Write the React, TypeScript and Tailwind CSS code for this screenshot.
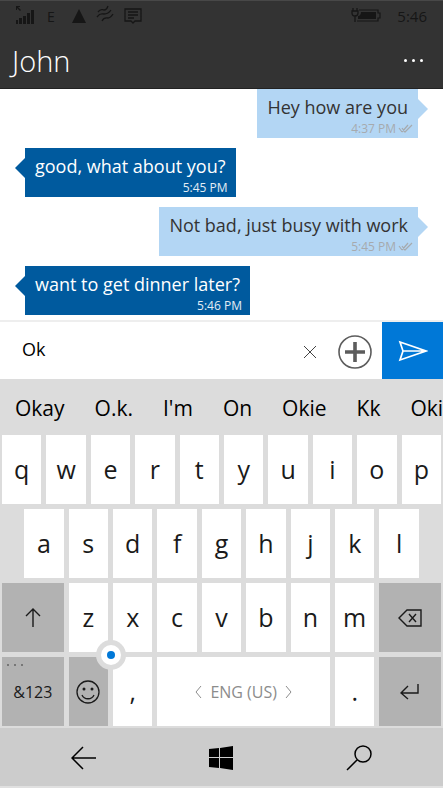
import { useState } from "react";
import type { ReactNode } from "react";

type Message = { text: string; time: string; mine: boolean };

const messages: Message[] = [
  { text: "Hey how are you", time: "4:37 PM", mine: true },
  { text: "good, what about you?", time: "5:45 PM", mine: false },
  { text: "Not bad, just busy with work", time: "5:45 PM", mine: true },
  { text: "want to get dinner later?", time: "5:46 PM", mine: false },
];

const suggestions = ["Okay", "O.k.", "I'm", "On", "Okie", "Kk", "Oki"];

function StatusBar() {
  return (
    <div className="flex h-[30px] items-center justify-between px-4 text-[#161616]">
      <div className="flex items-center">
        <svg width="19" height="20" viewBox="0 0 19 20" fill="currentColor" aria-label="Signal">
          <path d="M0 14h2v4H0zM3 12h3v6H3zM7 10h3v8H7zM11 7h3v11h-3zM15 4h3v14h-3z" />
          <path d="M0 0h4v1H2l3 3-1 1-3-3v2H0z" />
        </svg>
        <span className="ml-3 w-3 pt-px text-sm">E</span>
        <svg className="ml-3" width="16" height="14" viewBox="0 0 16 14" fill="currentColor" aria-label="Data">
          <path d="M8 0l7 14H1z" />
        </svg>
        <svg className="ml-2 -mt-1" width="20" height="18" viewBox="0 0 20 18" fill="none" stroke="currentColor" strokeWidth="1.3" aria-label="Wi-Fi">
          <path d="M3 7c3-4 4-2 6-2s3-1 4-4M2 12c3-4 4-3 7-3s5-1 7-4M7 16c2-4 4-3 6-3s3-1 5-4" />
        </svg>
        <svg className="ml-2" width="20" height="18" viewBox="0 0 20 18" fill="none" stroke="currentColor" strokeWidth="1.3" aria-label="Messages">
          <path d="M2 2h16v12h-6l-2 2-2-2H2zM5 5h10M5 8h10M5 11h6" />
        </svg>
      </div>
      <div className="flex items-center gap-4">
        <svg width="30" height="18" viewBox="0 0 30 18" aria-label="Battery charging">
          <path d="M8 3h19v3h2v5h-2v3H6" fill="none" stroke="currentColor" strokeWidth="1.2" />
          <path d="M10 5h15v7H7V9c2 0 3-2 3-4z" fill="currentColor" />
          <path d="M2 1v3M6 1v3M1 4h6v2c0 2-1 3-3 3S1 8 1 6zM4 9v6" fill="none" stroke="currentColor" strokeWidth="1.3" />
        </svg>
        <span className="text-[15px]">5:46</span>
      </div>
    </div>
  );
}

function Header() {
  return (
    <header className="border-t border-b border-t-[#484848] border-b-[#222] bg-[#333]">
      <StatusBar />
      <div className="flex h-[57px] items-center justify-between pt-[2px] pr-4 pl-3">
        <h1 className="text-[29px] font-light text-white">John</h1>
        <button type="button" aria-label="More" className="flex gap-[5px] p-1">
          <span className="size-[3px] rounded-full bg-white" />
          <span className="size-[3px] rounded-full bg-white" />
          <span className="size-[3px] rounded-full bg-white" />
        </button>
      </div>
    </header>
  );
}

function Ticks() {
  return (
    <svg width="15" height="10" viewBox="0 0 15 10" fill="none" stroke="currentColor" strokeWidth="1.2" aria-label="Read">
      <path d="M1 4l3 4M4 4l3 4 7-7M4 8l6-7" />
    </svg>
  );
}

function Bubble({ message }: { message: Message }) {
  const { text, time, mine } = message;
  return (
    <li
      className={`relative h-[49px] px-[10px] pt-1 ${
        mine ? "self-end bg-[#b3d6f4] text-[#333]" : "self-start bg-[#005a9e] text-white"
      }`}
    >
      <svg
        width="10"
        height="20"
        viewBox="0 0 10 20"
        aria-hidden="true"
        className={`absolute top-[10px] ${
          mine ? "left-full fill-[#b3d6f4]" : "right-full fill-[#005a9e]"
        }`}
      >
        <path d={mine ? "M0 0l10 10L0 20z" : "M10 0L0 10l10 10z"} />
      </svg>
      <p className="text-lg leading-7">{text}</p>
      <p
        className={`flex items-center justify-end gap-[2px] text-xs leading-4 ${
          mine ? "-mr-[5px] text-[#a6aaae]" : "-mr-[2px] text-[#e3edf5]"
        }`}
      >
        {time}
        {mine && <Ticks />}
      </p>
    </li>
  );
}

function Compose() {
  const [draft, setDraft] = useState("Ok");
  return (
    <form
      className="flex h-[59px] border-t-2 border-[#eee] bg-white"
      onSubmit={(e) => e.preventDefault()}
    >
      <input
        aria-label="Message"
        value={draft}
        onChange={(e) => setDraft(e.target.value)}
        className="min-w-0 flex-1 pb-1 pl-[22px] text-lg text-black outline-none"
      />
      <button type="button" aria-label="Clear" className="px-3 pt-[2px]" onClick={() => setDraft("")}>
        <svg width="12" height="12" viewBox="0 0 12 12" fill="none" stroke="#444">
          <path d="M0 0l12 12M12 0L0 12" />
        </svg>
      </button>
      <button type="button" aria-label="Attach" className="px-[10px] pt-[2px]">
        <svg width="34" height="34" viewBox="0 0 34 34" fill="none" stroke="#5c5c5c">
          <circle cx="17" cy="17" r="16" strokeWidth="1.6" />
          <path d="M17 7v20M7 17h20" strokeWidth="3.6" />
        </svg>
      </button>
      <button type="submit" aria-label="Send" className="flex w-[61px] items-center justify-center bg-[#0078d7]">
        <svg width="30" height="22" viewBox="0 0 30 22" fill="none" stroke="#fff" strokeWidth="1.7">
          <path d="M2 2l26 9L2 20l3-9zM5 11h22" />
        </svg>
      </button>
    </form>
  );
}

function Key({
  children,
  label,
  span = "col-span-2",
  dark = false,
}: {
  children: ReactNode;
  label?: string;
  span?: string;
  dark?: boolean;
}) {
  return (
    <button
      type="button"
      aria-label={label}
      className={`relative flex h-[69px] items-center justify-center text-[25px] text-[#1a1a1a] ${span} ${
        dark ? "bg-[#b2b2b2]" : "bg-white"
      }`}
    >
      {children}
    </button>
  );
}

function Keyboard() {
  return (
    <section aria-label="Keyboard" className="bg-[#dcdcdc] pb-[2px]">
      <div className="flex h-14 items-center gap-[30px] overflow-hidden pt-1 pl-[15px] text-[21px] text-black">
        {suggestions.map((s) => (
          <button type="button" key={s} className="shrink-0">
            {s}
          </button>
        ))}
      </div>
      {/* every letter takes two of the twenty columns, so rows can shift by half a key */}
      <div className="relative grid grid-cols-20 gap-[5px] px-[2px]">
        {"qwertyuiop".split("").map((k) => (
          <Key key={k}>{k}</Key>
        ))}
        {"asdfghjkl".split("").map((k) => (
          <Key key={k} span={k === "a" ? "col-span-2 col-start-2" : "col-span-2"}>
            {k}
          </Key>
        ))}
        <Key label="Shift" span="col-span-3 col-start-1" dark>
          <svg width="16" height="20" viewBox="0 0 16 20" fill="none" stroke="currentColor" strokeWidth="1.4">
            <path d="M8 19V2M1 8l7-7 7 7" />
          </svg>
        </Key>
        {"zxcvbnm".split("").map((k) => (
          <Key key={k}>{k}</Key>
        ))}
        <Key label="Backspace" span="col-span-3" dark>
          <svg width="24" height="18" viewBox="0 0 24 18" fill="none" stroke="currentColor" strokeWidth="1.4">
            <path d="M9 1h14v16H9L1 9zM11 5l7 8M18 5l-7 8" />
          </svg>
        </Key>
        <Key span="col-span-3" dark>
          <span className="absolute top-[7px] left-[5px] flex gap-[5px]">
            <i className="size-[2px] bg-[#777]" />
            <i className="size-[2px] bg-[#777]" />
            <i className="size-[2px] bg-[#777]" />
          </span>
          <span className="text-base">&amp;123</span>
        </Key>
        <Key label="Emoji" dark>
          <svg width="24" height="24" viewBox="0 0 24 24" fill="none" stroke="currentColor" strokeWidth="1.3">
            <circle cx="12" cy="12" r="11" />
            <path d="M6 15c2 5 10 5 12 0" />
            <circle cx="8" cy="9" r="1.5" fill="currentColor" stroke="none" />
            <circle cx="16" cy="9" r="1.5" fill="currentColor" stroke="none" />
          </svg>
        </Key>
        <Key>,</Key>
        <Key label="Space, English (US)" span="col-span-8">
          <span className="flex items-center gap-2 text-base text-[#8c8c8c]">
            <svg width="7" height="12" viewBox="0 0 7 12" fill="none" stroke="currentColor">
              <path d="M6 0L1 6l5 6" />
            </svg>
            ENG (US)
            <svg width="7" height="12" viewBox="0 0 7 12" fill="none" stroke="currentColor">
              <path d="M1 0l5 6-5 6" />
            </svg>
          </span>
        </Key>
        <Key>.</Key>
        <Key label="Enter" span="col-span-3" dark>
          <svg width="20" height="16" viewBox="0 0 20 16" fill="none" stroke="currentColor" strokeWidth="1.4">
            <path d="M18 0v9H2M8 2L1 9l7 6" />
          </svg>
        </Key>
        {/* cursor stick between the z, x, emoji and comma keys */}
        <span className="absolute bottom-14 left-1/4 flex size-[30px] -translate-x-1/2 items-center justify-center rounded-full bg-[#dcdcdc]">
          <span className="flex size-5 items-center justify-center rounded-full bg-white">
            <span className="size-2 rounded-full bg-[#0078d7]" />
          </span>
        </span>
      </div>
    </section>
  );
}

function NavBar() {
  return (
    <nav className="flex h-[60px] items-center justify-around border-b-2 border-[#e0e0e0] bg-[#ccc] px-[15px] pt-[2px] text-black">
      <button type="button" aria-label="Back">
        <svg width="26" height="24" viewBox="0 0 26 24" fill="none" stroke="currentColor" strokeWidth="1.5">
          <path d="M25 12H2M12 1L1 12l11 11" />
        </svg>
      </button>
      <button type="button" aria-label="Start">
        <svg width="24" height="24" viewBox="0 0 24 24" fill="currentColor">
          <path d="M0 3l10-1v9H0zM11 2l13-2v11H11zM0 12h10v10L0 21zM11 12h13v12l-13-2z" />
        </svg>
      </button>
      <button type="button" aria-label="Search">
        <svg width="26" height="26" viewBox="0 0 26 26" fill="none" stroke="currentColor" strokeWidth="1.5">
          <circle cx="17" cy="9" r="8" />
          <path d="M11 15L1 25" />
        </svg>
      </button>
    </nav>
  );
}

export default function App() {
  return (
    <div className="flex min-h-screen flex-col overflow-hidden bg-white font-['Open_Sans','Noto_Sans',sans-serif]">
      <Header />
      <ul className="flex flex-1 flex-col justify-end gap-[10px] px-[25px] pb-[5px]">
        {messages.map((m) => (
          <Bubble key={m.text} message={m} />
        ))}
      </ul>
      <Compose />
      <Keyboard />
      <NavBar />
    </div>
  );
}
